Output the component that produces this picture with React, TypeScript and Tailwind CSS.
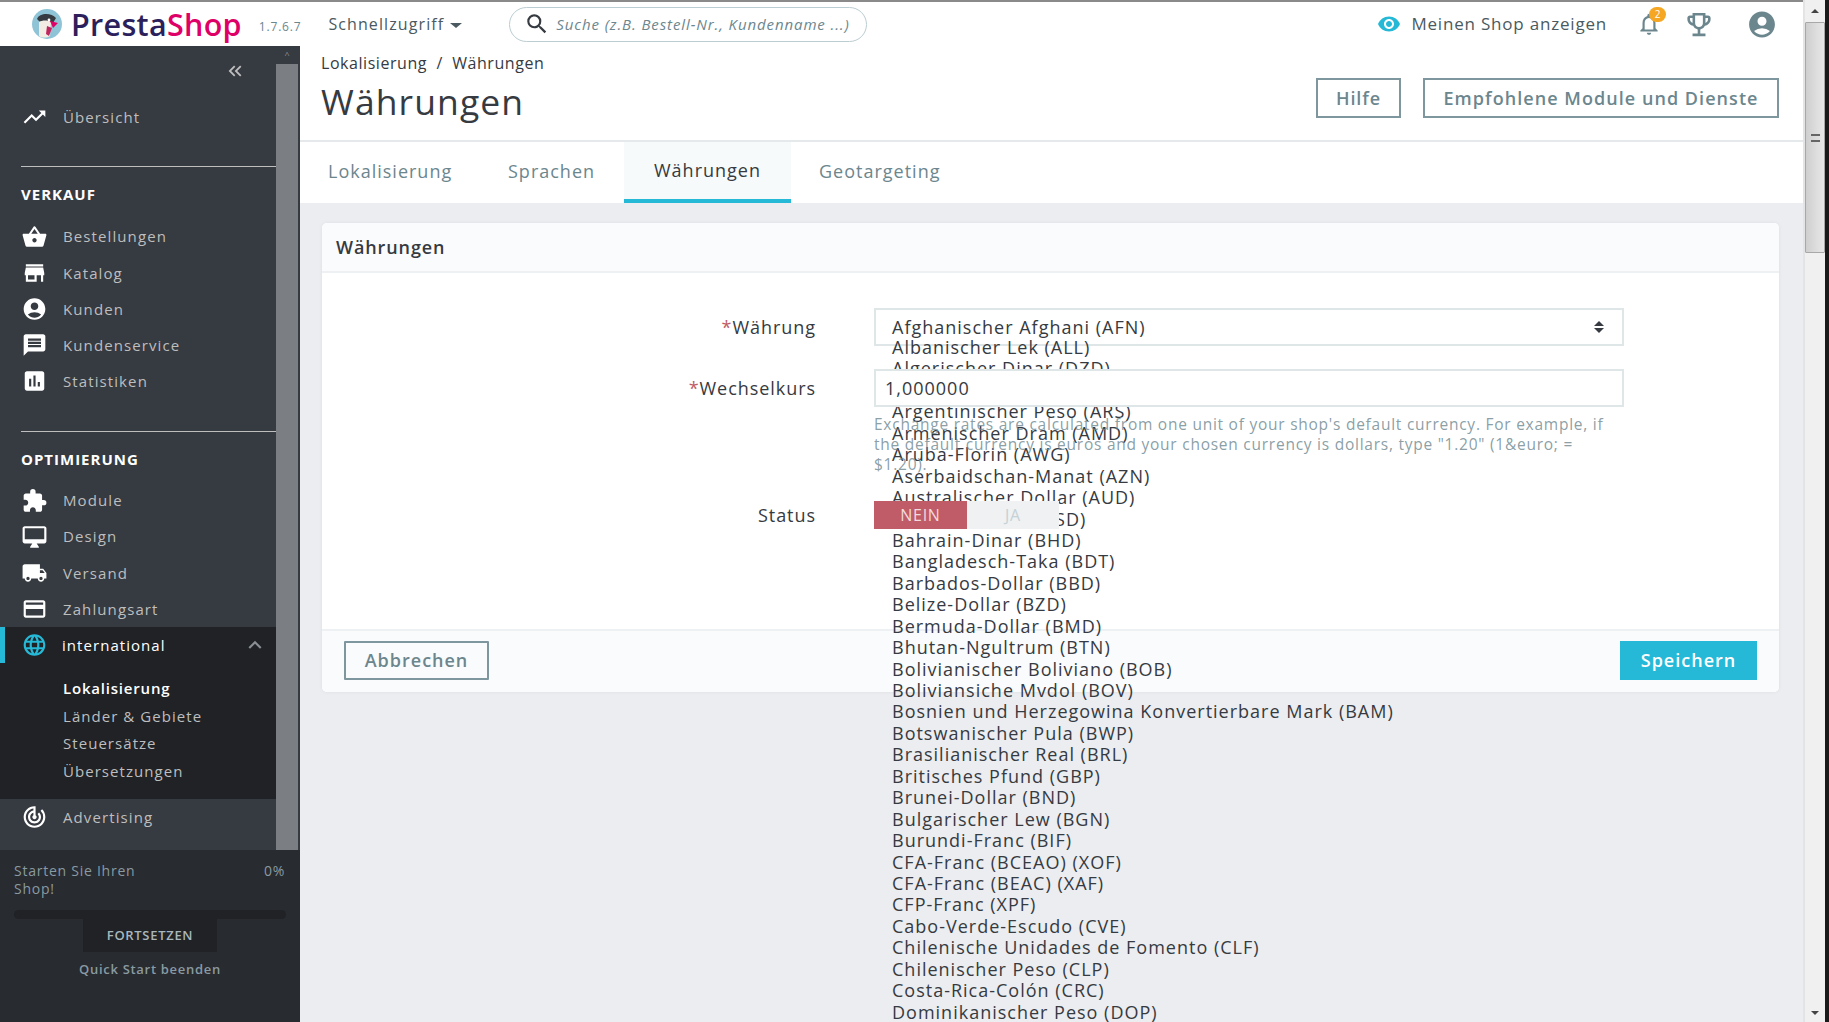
import React from "react";
import {
  MdAccountCircle,
  MdAssessment,
  MdCreditCard,
  MdExtension,
  MdKeyboardArrowUp,
  MdKeyboardDoubleArrowLeft,
  MdLanguage,
  MdLocalShipping,
  MdMessage,
  MdNotificationsNone,
  MdOutlineDesktopMac,
  MdOutlineEmojiEvents,
  MdSearch,
  MdShoppingBasket,
  MdStore,
  MdTrackChanges,
  MdTrendingUp,
  MdVisibility,
} from "react-icons/md";

const verkauf = [
  { label: "Bestellungen", Icon: MdShoppingBasket },
  { label: "Katalog", Icon: MdStore },
  { label: "Kunden", Icon: MdAccountCircle },
  { label: "Kundenservice", Icon: MdMessage },
  { label: "Statistiken", Icon: MdAssessment },
];

const optimierung = [
  { label: "Module", Icon: MdExtension },
  { label: "Design", Icon: MdOutlineDesktopMac },
  { label: "Versand", Icon: MdLocalShipping },
  { label: "Zahlungsart", Icon: MdCreditCard },
];

const submenu = ["Lokalisierung", "Länder & Gebiete", "Steuersätze", "Übersetzungen"];

const tabs = [
  { label: "Lokalisierung", cls: "w-[160px] pl-[28px] pb-[3px]" },
  { label: "Sprachen", cls: "w-[164px] pl-[48px] pb-[3px]" },
  { label: "Währungen", cls: "w-[167px] justify-center bg-[#f6fafb] border-b-4 border-[#25b9d7] text-[#363a41]" },
  { label: "Geotargeting", cls: "pl-[28px] pb-[3px]" },
];

const currencies = [
  "Albanischer Lek (ALL)",
  "Algerischer Dinar (DZD)",
  "Angolanischer Kwanza (AOA)",
  "Argentinischer Peso (ARS)",
  "Armenischer Dram (AMD)",
  "Aruba-Florin (AWG)",
  "Aserbaidschan-Manat (AZN)",
  "Australischer Dollar (AUD)",
  "Bahama-Dollar (BSD)",
  "Bahrain-Dinar (BHD)",
  "Bangladesch-Taka (BDT)",
  "Barbados-Dollar (BBD)",
  "Belize-Dollar (BZD)",
  "Bermuda-Dollar (BMD)",
  "Bhutan-Ngultrum (BTN)",
  "Bolivianischer Boliviano (BOB)",
  "Boliviansiche Mvdol (BOV)",
  "Bosnien und Herzegowina Konvertierbare Mark (BAM)",
  "Botswanischer Pula (BWP)",
  "Brasilianischer Real (BRL)",
  "Britisches Pfund (GBP)",
  "Brunei-Dollar (BND)",
  "Bulgarischer Lew (BGN)",
  "Burundi-Franc (BIF)",
  "CFA-Franc (BCEAO) (XOF)",
  "CFA-Franc (BEAC) (XAF)",
  "CFP-Franc (XPF)",
  "Cabo-Verde-Escudo (CVE)",
  "Chilenische Unidades de Fomento (CLF)",
  "Chilenischer Peso (CLP)",
  "Costa-Rica-Colón (CRC)",
  "Dominikanischer Peso (DOP)",
];

const NavItem = ({ label, Icon }: { label: string; Icon: React.ComponentType<{ className?: string }> }) => (
  <div className="flex h-[36.2px] items-center pl-[21px] text-[15px] tracking-[1.1px] text-[#bebebe]">
    <Icon className="mr-[15px] h-[26px] w-[27px] shrink-0 text-white" />
    {label}
  </div>
);

const Logo = () => (
  <svg viewBox="0 0 34 30" className="h-[30px] w-[34px]">
    <circle cx="17" cy="15" r="15" fill="#8fc4d6" />
    <path d="M7 10c2-6 14-7 19-1l-3 5-6-2-7 1z" fill="#363a41" />
    <path d="M9 13c3-2 9-2 12 0l-1 14c-3 2-8 2-11 0z" fill="#f3ece4" />
    <path d="M20 12l8 2-5 5z" fill="#df0067" />
    <path d="M17 17l5 2-3 8-3-2z" fill="#c0265e" />
    <circle cx="19" cy="11" r="1.4" fill="#fff" />
  </svg>
);

export default function App() {
  return (
    <div className="flex h-screen overflow-hidden bg-white font-['Open_Sans',sans-serif] text-[#363a41]">
      <div className="flex min-w-0 flex-1 flex-col">
        {/* top bar */}
        <header className="flex h-[46px] shrink-0 items-center border-t-2 border-[#8a8a8a] bg-white pr-[25px]">
          <div className="ml-[30px] flex items-center">
            <Logo />
          </div>
          <span className="ml-[7px] text-[30.5px] leading-none font-semibold tracking-[0.3px] text-[#2b1f5c]">
            Presta<span className="text-[#df0067]">Shop</span>
          </span>
          <span className="ml-[17px] mt-[5px] text-[12px] tracking-[0.8px] text-[#6c868e]">1.7.6.7</span>
          <span className="ml-[27px] flex items-center text-[16px] tracking-[1.1px] text-[#4a5a60]">
            Schnellzugriff
            <span className="ml-[6px] mt-[2px] h-0 w-0 border-x-[6px] border-t-[5px] border-x-transparent border-t-[#4a5a60]" />
          </span>
          <div className="ml-[47px] flex h-[35px] w-[358px] items-center rounded-full border border-[#bbcdd2] pl-[14px]">
            <MdSearch className="h-[26px] w-[26px] text-[#363a41]" />
            <span className="ml-[6px] text-[15px] italic tracking-[0.9px] text-[#6c868e]">
              Suche (z.B. Bestell-Nr., Kundenname ...)
            </span>
          </div>
          <div className="ml-auto flex items-center">
            <MdVisibility className="h-[24px] w-[28px] text-[#25b9d7]" />
            <span className="ml-[8px] text-[17px] tracking-[0.8px] text-[#4a5a60]">Meinen Shop anzeigen</span>
          </div>
          <div className="relative ml-[29px]">
            <MdNotificationsNone className="h-[26px] w-[26px] text-[#6c868e]" />
            <span className="absolute -top-[4px] left-[13px] flex h-[15px] w-[17px] items-center justify-center rounded-full bg-[#f5a623] text-[10px] text-white">
              2
            </span>
          </div>
          <MdOutlineEmojiEvents className="ml-[21px] h-[31px] w-[32px] text-[#6c868e]" />
          <MdAccountCircle className="ml-[31px] h-[31px] w-[32px] text-[#6c868e]" />
        </header>

        <div className="flex min-h-0 flex-1">
          {/* sidebar */}
          <aside className="flex w-[300px] shrink-0 flex-col bg-[#282b30]">
            <div className="flex h-[804px] bg-[#363a41]">
              <nav className="flex w-[276px] shrink-0 flex-col">
                <div className="flex h-[48px] items-center justify-end pr-[29px] pt-[1px]">
                  <MdKeyboardDoubleArrowLeft className="h-[22px] w-[24px] text-[#bebebe]" />
                </div>
                <div className="flex h-[46px] items-center pl-[21px] text-[15px] tracking-[1.1px] text-[#bebebe]">
                  <MdTrendingUp className="mr-[15px] h-[26px] w-[27px] text-white" />
                  Übersicht
                </div>
                <div className="ml-[21px] mt-[26px] h-px bg-[#bebebe]" />
                <div className="mt-[16px] h-[21px] pl-[21px] text-[15px] leading-[23px] font-bold tracking-[1px] text-white">
                  VERKAUF
                </div>
                <div className="mt-[14.5px]">
                  {verkauf.map((item) => (
                    <NavItem key={item.label} {...item} />
                  ))}
                </div>
                <div className="ml-[21px] mt-[31.5px] h-px bg-[#bebebe]" />
                <div className="mt-[16px] h-[21px] pl-[21px] text-[15px] leading-[23px] font-bold tracking-[1px] text-white">
                  OPTIMIERUNG
                </div>
                <div className="mt-[13.5px]">
                  {optimierung.map((item) => (
                    <NavItem key={item.label} {...item} />
                  ))}
                </div>
                <div className="bg-[#202226] pb-[14px]">
                  <div className="relative flex h-[36px] items-center pl-[21px] text-[15px] tracking-[1.05px] text-white">
                    <span className="absolute left-0 top-0 h-full w-[5px] bg-[#25b9d7]" />
                    <MdLanguage className="mr-[14px] h-[26px] w-[27px] text-[#25b9d7]" />
                    international
                    <MdKeyboardArrowUp className="ml-auto mr-[8px] h-[26px] w-[26px] text-[#8a8f94]" />
                  </div>
                  <div className="mt-[12px] flex flex-col pl-[63px]">
                    {submenu.map((s, i) => (
                      <div
                        key={s}
                        className={`h-[27.5px] text-[15px] leading-[27.5px] ${i === 0 ? "font-semibold tracking-[0.8px] text-white" : "tracking-[1.05px] text-[#bebebe]"}`}
                      >
                        {s}
                      </div>
                    ))}
                  </div>
                </div>
                <NavItem label="Advertising" Icon={MdTrackChanges} />
              </nav>
              {/* sidebar scrollbar */}
              <div className="flex w-[22px] shrink-0 flex-col bg-[#363a41]">
                <div className="flex h-[18px] items-center justify-center text-[9px] text-[#8a8f94]">^</div>
                <div className="flex-1 bg-[#7b7e82]" />
              </div>
            </div>
            <div className="flex flex-col px-[14px] pt-[12px]">
              <div className="flex justify-between text-[14px] leading-[18px] tracking-[0.75px] text-[#8a9aa2]">
                <span className="w-[140px]">Starten Sie Ihren Shop!</span>
                <span className="pr-[1px]">0%</span>
              </div>
              <div className="mt-[12px] h-[9px] rounded-full bg-[#202226]" />
              <div className="mx-auto flex h-[33px] w-[134px] items-center justify-center bg-[#202226] text-[13px] font-semibold tracking-[0.7px] text-[#a9b7bd]">
                FORTSETZEN
              </div>
              <div className="mt-[8px] text-center text-[13px] font-semibold tracking-[0.7px] text-[#8a9aa2]">
                Quick Start beenden
              </div>
            </div>
          </aside>

          {/* main */}
          <main className="flex min-w-0 flex-1 flex-col bg-[#ebedf0]">
            <div className="flex h-[96px] shrink-0 items-start justify-between border-b-2 border-[#e6e9eb] bg-white pl-[21px] pr-[24px]">
              <div>
                <div className="mt-[6px] text-[16px] leading-[22px] tracking-[0.55px] text-[#363a41]">
                  Lokalisierung&nbsp; /&nbsp; Währungen
                </div>
                <h1 className="mt-[5px] text-[35.5px] leading-[44px] tracking-[1.1px] text-[#363a41]">Währungen</h1>
              </div>
              <div className="mt-[32px] flex gap-[22px]">
                <button className="h-[40px] w-[85px] border-2 border-[#7e979e] text-[18px] font-semibold tracking-[0.9px] text-[#6c868e]">
                  Hilfe
                </button>
                <button className="h-[40px] w-[356px] border-2 border-[#7e979e] text-[18px] font-semibold tracking-[1.05px] text-[#6c868e]">
                  Empfohlene Module und Dienste
                </button>
              </div>
            </div>
            <div className="flex h-[61px] shrink-0 bg-white text-[18px] tracking-[1px] text-[#6c868e]">
              {tabs.map((t) => (
                <div key={t.label} className={`flex items-center ${t.cls}`}>
                  {t.label}
                </div>
              ))}
            </div>

            <section className="relative ml-[22px] mr-[24px] mt-[20px] flex h-[469px] flex-col rounded-[5px] bg-white shadow-[0_0_4px_rgba(0,0,0,0.06)]">
              <div className="flex h-[50px] shrink-0 items-center rounded-t-[5px] border-b-2 border-[#eef1f3] bg-[#fafbfc] pl-[14px] text-[18px] font-semibold tracking-[0.9px] text-[#363a41]">
                Währungen
              </div>

              {/* open native select list, spills out below the card */}
              <div className="absolute left-[570px] top-[114px] z-0 text-[18px] leading-[21.44px] tracking-[1px] whitespace-nowrap text-[#363a41]">
                {currencies.map((c) => (
                  <div key={c} className="h-[21.44px]">
                    {c}
                  </div>
                ))}
              </div>

              <div className="flex-1">
                <div className="mt-[35px] flex h-[38px] items-center">
                  <label className="w-[494px] text-right text-[18px] tracking-[0.95px]">
                    <span className="text-[#c05c67]">*</span>Währung
                  </label>
                  <div className="ml-[58px] flex h-[38px] w-[750px] items-center justify-between border-2 border-[#dfe6e8] pl-[16px] pr-[18px] text-[18px] tracking-[1px]">
                    Afghanischer Afghani (AFN)
                    <span className="flex flex-col gap-[2px]">
                      <span className="h-0 w-0 border-x-[5px] border-b-[5px] border-x-transparent border-b-[#363a41]" />
                      <span className="h-0 w-0 border-x-[5px] border-t-[5px] border-x-transparent border-t-[#363a41]" />
                    </span>
                  </div>
                </div>
                <div className="mt-[23px] flex items-center">
                  <label className="w-[494px] text-right text-[18px] tracking-[0.95px]">
                    <span className="text-[#c05c67]">*</span>Wechselkurs
                  </label>
                  <div className="relative z-10 ml-[58px] flex h-[38px] w-[750px] items-center border-2 border-[#dfe6e8] bg-white pl-[9px] text-[18px] tracking-[1px]">
                    1,000000
                  </div>
                </div>
                <p className="relative z-10 ml-[552px] mt-[7px] w-[745px] text-[15.5px] leading-[20px] tracking-[0.75px] text-[#6c868e]/80">
                  Exchange rates are calculated from one unit of your shop's default currency. For example, if the
                  default currency is euros and your chosen currency is dollars, type "1.20" (1&amp;euro; = $1.20).
                </p>
                <div className="mt-[27px] flex items-center">
                  <label className="w-[494px] text-right text-[18px] tracking-[0.95px]">Status</label>
                  <div className="relative z-10 ml-[58px] flex h-[28px] text-[16px] tracking-[0.7px]">
                    <span className="flex w-[93px] items-center justify-center bg-[#c05c67] text-[#f2d9dc]">NEIN</span>
                    <span className="flex w-[92px] items-center justify-center bg-[#eff1f2] text-[#c5d2d6]">JA</span>
                  </div>
                </div>
              </div>

              <div className="flex h-[63px] shrink-0 items-start justify-between rounded-b-[5px] border-t-2 border-[#eef1f3] bg-[#fafbfc] px-[22px] pt-[10px]">
                <button className="h-[39px] w-[145px] rounded-[1px] border-2 border-[#7e979e] text-[18px] font-semibold tracking-[1px] text-[#6c868e]">
                  Abbrechen
                </button>
                <button className="h-[39px] w-[137px] bg-[#25b9d7] text-[18px] font-semibold tracking-[1px] text-white">
                  Speichern
                </button>
              </div>
            </section>
          </main>
        </div>
      </div>

      {/* browser scrollbar */}
      <div className="flex h-full w-[26px] shrink-0 flex-col border-l-2 border-r-[4px] border-l-[#e2e4e6] border-r-[#1a1a1a] bg-[#f0f0f0]">
        <div className="flex h-[22px] items-center justify-center">
          <span className="h-0 w-0 border-x-[4px] border-b-[4px] border-x-transparent border-b-[#444]" />
        </div>
        <div className="flex h-[231px] w-[20px] items-center justify-center rounded-[1px] border border-[#a8a8a8] bg-gradient-to-r from-[#cfcfcf] to-[#e8e8e8]">
          <span className="h-[8px] w-[9px] border-y-2 border-[#666]" />
        </div>
        <div className="flex-1" />
        <div className="flex h-[18px] items-center justify-center">
          <span className="h-0 w-0 border-x-[4px] border-t-[4px] border-x-transparent border-t-[#444]" />
        </div>
      </div>
    </div>
  );
}
